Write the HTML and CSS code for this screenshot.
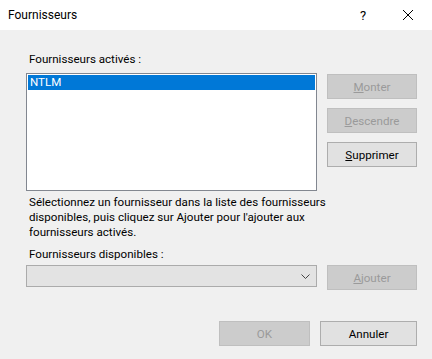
FILE: index.html
```html
<!DOCTYPE html>
<html lang="fr">

<head>
    <meta charset="UTF-8">
    <meta name="viewport" content="width=device-width, initial-scale=1.0">
    <title>Fournisseurs</title>
    <link rel="stylesheet" href="styles.css">
</head>

<body>
    <header class="titlebar">
        <span class="title">Fournisseurs</span>
        <span class="help">?</span>
        <span class="close">
            <svg width="12" height="12" viewBox="0 0 12 12">
                <path d="M1 1 L11 11 M11 1 L1 11" stroke="#000" stroke-width="1" fill="none" />
            </svg>
        </span>
    </header>

    <main class="content">
        <div class="label">Fournisseurs activés :</div>

        <div class="row">
            <div class="listbox">
                <div class="item selected">NTLM</div>
            </div>
            <div class="side">
                <button class="btn" disabled><u>M</u>onter</button>
                <button class="btn" disabled><u>D</u>escendre</button>
                <button class="btn"><u>S</u>upprimer</button>
            </div>
        </div>

        <p class="hint">
            Sélectionnez un fournisseur dans la liste des fournisseurs<br>
            disponibles, puis cliquez sur Ajouter pour l'ajouter aux<br>
            fournisseurs activés.
        </p>

        <div class="label">Fournisseurs disponibles :</div>

        <div class="row">
            <div class="combo">
                <svg width="9" height="5" viewBox="0 0 9 5">
                    <path d="M0.5 0.5 L4.5 4.5 L8.5 0.5" stroke="#444" stroke-width="1" fill="none" />
                </svg>
            </div>
            <div class="side">
                <button class="btn add" disabled><u>A</u>jouter</button>
            </div>
        </div>

        <footer class="actions">
            <button class="btn ok" disabled>OK</button>
            <button class="btn cancel">Annuler</button>
        </footer>
    </main>
</body>

</html>
```

FILE: styles.css
```css
body {
    margin: 0;
    width: 432px;
    height: 359px;
    background-color: #f0f0f0;
    font-family: "Segoe UI", Roboto, sans-serif;
    font-size: 11.6px;
    color: #000;
    overflow: hidden;
}

/* title bar */
.titlebar {
    display: flex;
    align-items: center;
    height: 30px;
    background-color: #fff;
    font-size: 12px;
}

.title {
    padding-left: 8px;
    flex: 1;
}

.help {
    width: 12px;
    margin-right: 30px;
    font-size: 13px;
}

.close {
    display: flex;
    width: 12px;
    margin-right: 18px;
}

/* dialog body */
.content {
    padding: 0 15px 0 26px;
}

.label {
    height: 15px;
    line-height: 15px;
    padding-left: 3px;
    margin-top: 22px;
}

.row {
    display: flex;
    gap: 10px;
    margin-top: 6px;
}

.listbox {
    width: 287px;
    height: 114px;
    border: 1px solid #828790;
    background-color: #fff;
    padding: 1px;
}

.item {
    height: 15px;
    line-height: 15px;
    padding-left: 2px;
}

.selected {
    background-color: #0078d7;
    color: #fff;
}

.side {
    display: flex;
    flex-direction: column;
    gap: 9px;
    width: 90px;
    padding-top: 1px;
}

.btn {
    height: 25px;
    width: 90px;
    font-family: inherit;
    font-size: 11.6px;
    background-color: #e1e1e1;
    border: 1px solid #adadad;
    color: #000;
    padding: 0;
}

.btn:disabled {
    background-color: #cccccc;
    border-color: #bfbfbf;
    color: #9a9a9a;
}

.hint {
    margin: 4px 0 0 0;
    padding-left: 3px;
    line-height: 15px;
}

.hint + .label {
    margin-top: 7px;
}

.hint + .label + .row {
    margin-top: 3px;
}

.combo {
    width: 288px;
    height: 20px;
    border: 1px solid #ababab;
    background-color: #e3e3e3;
    display: flex;
    align-items: center;
    justify-content: flex-end;
    padding-right: 1px;
}

.combo svg {
    margin-right: 5px;
}

.add {
    margin-top: -1px;
}

.actions {
    display: flex;
    justify-content: flex-end;
    gap: 10px;
    margin-top: 31px;
}

.ok {
    width: 91px;
}

.cancel {
    width: 97px;
}
```
